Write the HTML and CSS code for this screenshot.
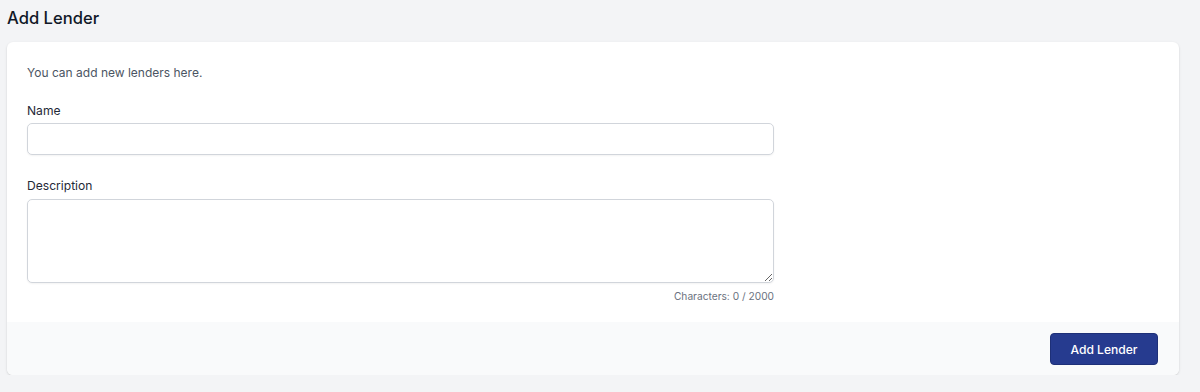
FILE: index.html
```html
<!DOCTYPE html>
<html lang="en">
<head>
    <meta charset="UTF-8">
    <title>Add Lender</title>
    <link rel="stylesheet" href="styles.css">
</head>
<body>
    <div class="page">
        <h1 class="page-title">Add Lender</h1>
        <form class="card">
            <div class="card-body">
                <p class="intro">You can add new lenders here.</p>

                <div class="field">
                    <label for="name">Name</label>
                    <input type="text" id="name">
                </div>

                <div class="field">
                    <label for="description" class="label-area">Description</label>
                    <textarea id="description"></textarea>
                    <p class="counter">Characters: 0 / 2000</p>
                </div>
            </div>
            <div class="card-footer">
                <button type="button" class="primary-btn">Add Lender</button>
            </div>
        </form>
    </div>
</body>
</html>
```

FILE: styles.css
```css
* {
    margin: 0;
    padding: 0;
    box-sizing: border-box;
}

body {
    background: #f3f4f6;
    font-family: "Inter", "Liberation Sans", sans-serif;
    color: #111827;
}

.page {
    padding: 0 21px 0 7px;
}

.page-title {
    font-size: 16.6px;
    font-weight: 500;
    line-height: 22px;
    padding-top: 7px;
    margin-bottom: 13px;
    color: #111827;
}

.card {
    background: #fff;
    border-radius: 6px;
    box-shadow: 0 1px 3px rgba(0, 0, 0, 0.1), 0 1px 2px rgba(0, 0, 0, 0.06);
    overflow: hidden;
}

.card-body {
    padding: 23px 20px 19px;
}

.intro {
    font-size: 12px;
    line-height: 16px;
    color: #4b5563;
    margin-bottom: 21px;
}

.field {
    width: 747px;
    margin-bottom: 22px;
}

.field:last-child {
    margin-bottom: 0;
}

label {
    display: block;
    font-size: 12.1px;
    line-height: 17px;
    color: #1f2937;
    margin-bottom: 4px;
}

.label-area {
    margin-bottom: 5px;
}

input,
textarea {
    display: block;
    width: 100%;
    border: 1px solid #d1d5db;
    border-radius: 5px;
    box-shadow: 0 1px 2px rgba(0, 0, 0, 0.05);
    font-family: inherit;
    font-size: 13px;
    padding: 6px 10px;
}

input {
    height: 32px;
}

textarea {
    height: 84px;
}

.counter {
    text-align: right;
    font-size: 10.2px;
    line-height: 14px;
    color: #6b7280;
    margin-top: 6px;
}

.card-footer {
    background: #f9fafb;
    padding: 11px 21px 10px;
    display: flex;
    justify-content: flex-end;
}

.primary-btn {
    background: #263b8f;
    color: #fff;
    border: 1px solid #1e3078;
    border-radius: 4px;
    font-family: inherit;
    font-size: 12.1px;
    font-weight: 500;
    width: 108px;
    height: 32px;
    cursor: pointer;
}
```
